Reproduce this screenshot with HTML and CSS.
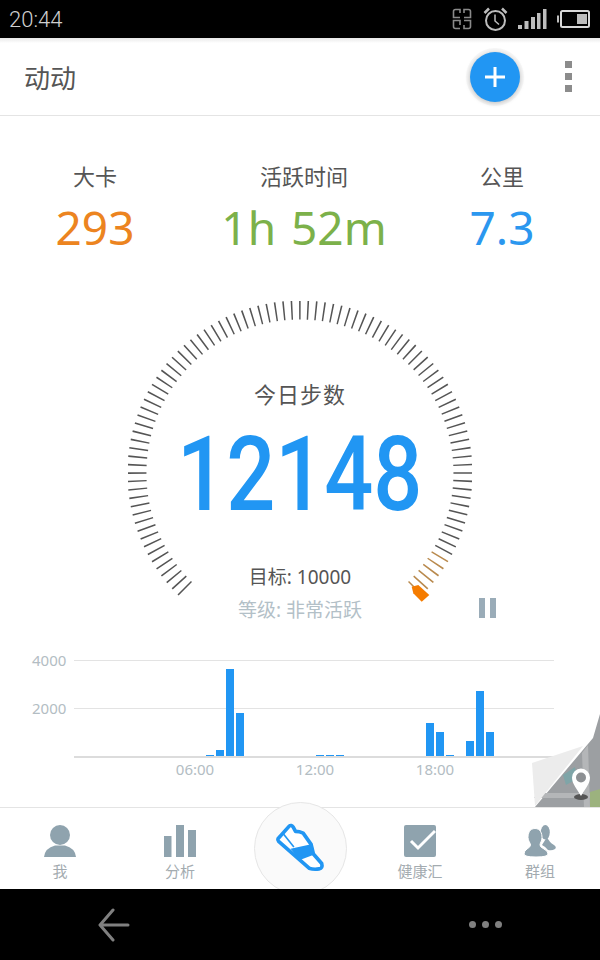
FILE: index.html
```html
<!DOCTYPE html>
<html lang="zh">
<head>
    <meta charset="UTF-8">
    <title>动动</title>
    <link rel="stylesheet" href="styles.css">
</head>
<body>

<div class="status-bar">
    <span class="clock">20:44</span>
    <div class="status-icons">
        <svg width="22" height="22" viewBox="0 0 22 22" fill="none" stroke="#8a8a8a" stroke-width="1.6">
            <path d="M9 9.5H2.5V3.5Q2.5 1.5 4.5 1.5H9V5M13 5V1.5H17.5Q19.5 1.5 19.5 3.5V9.500H13M9 17V12.500H2.500V18.500Q2.500 20.500 4.500 20.500H9M13 17V20.500H17.500Q19.500 20.500 19.500 18.500V12.500H13"/>
        </svg>
        <svg width="25" height="25" viewBox="0 0 25 25" fill="none" stroke="#bdbdbd" stroke-width="2">
            <circle cx="12.500" cy="13.500" r="9.500"/>
            <path d="M12 7.500V14L16 17.500" stroke-width="1.500"/>
            <path d="M1.500 6L6 1.500M19 1.500L23.500 6" stroke-width="2.500"/>
        </svg>
        <svg class="signal" width="29" height="21" viewBox="0 0 29 21" fill="#bdbdbd">
            <rect x="0" y="16" width="4" height="4"/>
            <rect x="6.500" y="12" width="4" height="8"/>
            <rect x="13" y="8" width="4" height="12"/>
            <rect x="19" y="4" width="3.500" height="16" />
            <rect x="25" y="0" width="3.500" height="20"/>
        </svg>
        <svg width="33" height="20" viewBox="0 0 33 20">
            <rect x="0" y="6.500" width="2" height="7" fill="#bdbdbd"/>
            <rect x="4" y="2" width="28" height="16" rx="1.500" fill="none" stroke="#d8d8d8" stroke-width="2"/>
            <rect x="20" y="5" width="10" height="10" fill="#bdbdbd"/>
        </svg>
    </div>
</div>

<header class="app-header">
    <h1 class="app-title">动动</h1>
    <button class="fab">
        <svg width="24" height="24" viewBox="0 0 24 24" stroke="#fff" stroke-width="3"><path d="M12 2V22M2 12H22"/></svg>
    </button>
    <div class="kebab"><i></i><i></i><i></i></div>
</header>

<main class="content">
    <section class="stats">
        <div class="stat">
            <div class="stat-label">大卡</div>
            <div class="stat-value orange">293</div>
        </div>
        <div class="stat">
            <div class="stat-label">活跃时间</div>
            <div class="stat-value green">1h 52m</div>
        </div>
        <div class="stat">
            <div class="stat-label">公里</div>
            <div class="stat-value blue">7.3</div>
        </div>
    </section>

    <section class="gauge">
        <!-- 96 ticks over 270deg, pathLength counts ticks so the dash repeats once per tick -->
        <svg class="gauge-ring" width="344" height="344" viewBox="0 0 344 344" fill="none" stroke-width="19" stroke-dasharray=".19 .81" stroke-dashoffset=".595">
            <path d="M59.600 290.100A163 163 0 1 1 313.800 252.300" pathLength="91" stroke="#555"/>
            <path d="M313.800 252.300A163 163 0 0 1 284.400 290.100" pathLength="6" stroke="#b98a4e"/>
            <polygon points="283.700,285.700 290.300,284 301.300,294 293.700,300.700 285.300,292.300" fill="#f57c00"/>
        </svg>
        <div class="gauge-title">今日步数</div>
        <div class="gauge-steps"><span>12148</span></div>
        <div class="gauge-goal">目标: 10000</div>
        <div class="gauge-level">等级: 非常活跃</div>
        <div class="pause"><i></i><i></i></div>
    </section>

    <section class="chart">
        <div class="chart-main">
            <div class="y-axis">
                <span>4000</span>
                <span>2000</span>
            </div>
            <div class="plot">
                <div class="bar" style="grid-column: 14; height: 1px"></div>
                <div class="bar" style="grid-column: 15; height: 6px"></div>
                <div class="bar" style="grid-column: 16; height: 87px"></div>
                <div class="bar" style="grid-column: 17; height: 43px"></div>
                <div class="bar" style="grid-column: 25; height: 1px"></div>
                <div class="bar" style="grid-column: 26; height: 1px"></div>
                <div class="bar" style="grid-column: 27; height: 1px"></div>
                <div class="bar" style="grid-column: 36; height: 33px"></div>
                <div class="bar" style="grid-column: 37; height: 24px"></div>
                <div class="bar" style="grid-column: 38; height: 1px"></div>
                <div class="bar" style="grid-column: 40; height: 15px"></div>
                <div class="bar" style="grid-column: 41; height: 65px"></div>
                <div class="bar" style="grid-column: 42; height: 24px"></div>
            </div>
        </div>
        <div class="x-axis">
            <span>06:00</span>
            <span>12:00</span>
            <span>18:00</span>
        </div>
    </section>

    <svg class="page-curl" width="70" height="120" viewBox="0 0 70 120">
        <polygon points="5,120 63,51 70,27 70,120" fill="#9c9fa2"/>
        <polygon points="33,88 45,80 47,92 36,98" fill="#7fa5a8"/>
        <polygon points="52,66 58,58 60,120 54,120" fill="#b4b6b8"/>
        <polygon points="8,106 70,106 70,111 4,111" fill="#b4b6b8"/>
        <polygon points="60,120 70,120 70,102 60,105" fill="#9cb27e"/>
        <polygon points="2,76 53,59 5,119" fill="#ececec"/>
        <ellipse cx="51" cy="110" rx="7" ry="3" fill="#555"/>
        <path d="M51 109C47 102 42 97 42 90.500A9 9 0 0 1 60 90.500C60 97 55 102 51 109Z" fill="#fff"/>
        <circle cx="51" cy="90.500" r="5" fill="#8d9093"/>
    </svg>
</main>

<nav class="tabs">
    <div class="tab">
        <svg width="32" height="32" viewBox="0 0 32 32" fill="#8fa3ae">
            <circle cx="16" cy="10" r="10"/>
            <path d="M0 32Q1 23 11 20.500H21Q31 23 32 32Z"/>
        </svg>
        <span>我</span>
    </div>
    <div class="tab">
        <svg width="32" height="32" viewBox="0 0 32 32" fill="#8fa3ae">
            <rect x="0" y="11" width="7.500" height="21"/>
            <rect x="12" y="0" width="8" height="32"/>
            <rect x="24" y="5" width="8" height="27"/>
        </svg>
        <span>分析</span>
    </div>
    <div class="tab tab-center">
        <div class="tab-circle">
            <svg width="53" height="50" viewBox="100 80 160 150" fill="none" stroke="#2196f3" stroke-width="11" stroke-linejoin="round">
                <path d="M112 130L146 92Q152 87 158 95L165 108Q177 108 188 113L212 147L219 176L244 205Q248 219 236 221Q220 224 206 219L114 138Q110 134 112 130Z" fill="#fff"/>
                <path d="M128 115L160 155" stroke-width="5"/>
                <path d="M150 160L216 146L222 178L178 194Z" fill="#2196f3" stroke="none"/>
            </svg>
        </div>
    </div>
    <div class="tab">
        <svg width="32" height="32" viewBox="0 0 32 32">
            <rect x="0" y="0" width="32" height="32" rx="2" fill="#8fa3ae"/>
            <path d="M7 16L14 23L31 6" fill="none" stroke="#fff" stroke-width="3"/>
        </svg>
        <span>健康汇</span>
    </div>
    <div class="tab">
        <svg width="32" height="32" viewBox="0 0 32 32" fill="#8fa3ae">
            <ellipse cx="21.300" cy="7.300" rx="4.500" ry="7.300"/>
            <path d="M23 12Q25 17 30 20Q33 22 31 24Q28 26 24 25Q22 22 18 20Z"/>
            <path d="M11 3.500C5.500 3.500 4 8.500 4 12.500C4 16 6.500 18 6.500 20Q6.500 22 3 24Q0 26 0 29Q0 32 12 32Q24 32 24 29Q24 26 20 24Q16 22 16 20C16 18 18 16 18 12.500C18 8.500 16.500 3.500 11 3.500Z" stroke="#fff" stroke-width="1"/>
        </svg>
        <span>群组</span>
    </div>
</nav>

<div class="system-nav">
    <svg width="32" height="34" viewBox="0 0 32 34" fill="none" stroke="#808080" stroke-width="3" stroke-linecap="round" stroke-linejoin="round">
        <path d="M15 2L2 17L15 32M3 17H30"/>
    </svg>
    <div class="more-dots"><i></i><i></i><i></i></div>
</div>

</body>
</html>
```

FILE: styles.css
```css
* {
    box-sizing: border-box;
}

body {
    font-family: 'Noto Sans', 'Noto Sans CJK SC', sans-serif;
    background-color: #fff;
    color: #555;
    margin: 0;
    width: 600px;
    height: 960px;
    display: flex;
    flex-direction: column;
    overflow: hidden;
}

.status-bar {
    height: 38px;
    background-color: #000;
    display: flex;
    align-items: center;
    justify-content: space-between;
    padding: 0 10px 0 9px;
}

.clock {
    font-family: 'Roboto', sans-serif;
    font-weight: 300;
    font-size: 22px;
    color: #d0d0d0;
}

.status-icons {
    display: flex;
    align-items: center;
    gap: 10px;
}

.status-icons svg {
    display: block;
}

.app-header {
    height: 78px;
    display: flex;
    align-items: center;
    padding: 0 28px 0 24px;
    background: linear-gradient(#e8e8e8, #fff 5px);
    border-bottom: 1px solid #e4e4e4;
}

.app-title {
    flex: 1;
    margin: 0;
    font-weight: 400;
    font-size: 26px;
    color: #555;
}

.fab {
    width: 50px;
    height: 50px;
    margin-right: 45px;
    padding: 0;
    border: none;
    border-radius: 50%;
    background-color: #2196f3;
    box-shadow: 0 1px 5px rgba(0, 0, 0, 0.25), 0 0 0 4px rgba(0, 0, 0, 0.03);
    display: flex;
    align-items: center;
    justify-content: center;
}

.kebab {
    display: flex;
    flex-direction: column;
    gap: 5px;
}

.kebab i {
    display: block;
    width: 7px;
    height: 7px;
    background-color: #8c8c8c;
}

.content {
    position: relative;
    height: 691px;
    padding-top: 42px;
}

.stats {
    display: grid;
    grid-template-columns: 190px 228px 168px;
    text-align: center;
}

.stat-label {
    font-size: 22px;
    line-height: 36px;
    color: #555;
}

.stat-value {
    font-size: 46px;
    line-height: 60px;
    margin-top: 3px;
    word-spacing: 3px;
}

.orange {
    color: #ec8420;
}

.green {
    color: #7cb14a;
}

.blue {
    color: #2b97ef;
}

.gauge {
    position: relative;
    width: 344px;
    height: 334px;
    margin: 44px auto 0;
    padding-top: 76px;
    text-align: center;
}

.gauge-ring {
    position: absolute;
    top: 0;
    left: 0;
}

.gauge-title {
    font-size: 22px;
    line-height: 34px;
    letter-spacing: 1px;
    color: #555;
}

.gauge-steps {
    font-family: 'Roboto', sans-serif;
    font-weight: 500;
    font-size: 104px;
    line-height: 112px;
    margin-top: 8px;
    color: #2196f3;
}

.gauge-steps span {
    display: inline-block;
    transform: scaleX(0.83);
}

.gauge-goal {
    font-size: 19px;
    line-height: 30px;
    margin-top: 31px;
    color: #555;
}

.gauge-level {
    font-size: 19px;
    line-height: 30px;
    margin-top: 3px;
    color: #b3c0c7;
}

.pause {
    position: absolute;
    left: 351px;
    top: 297px;
    display: flex;
    gap: 5px;
}

.pause i {
    display: block;
    width: 6px;
    height: 20px;
    background-color: #9aacb8;
}

.chart {
    margin-top: 25px;
}

.chart-main {
    display: flex;
    height: 98px;
}

.y-axis {
    width: 74px;
    padding-left: 32px;
    font-size: 15px;
    color: #b3bdc3;
    display: flex;
    flex-direction: column;
}

.y-axis span {
    height: 48px;
    line-height: 0;
}

.plot {
    width: 480px;
    display: grid;
    grid-template-columns: repeat(48, 10px);
    align-items: end;
    background-image: linear-gradient(#e3e3e3, #e3e3e3), linear-gradient(#e3e3e3, #e3e3e3);
    background-size: 100% 1px, 100% 1px;
    background-position: 0 0, 0 48px;
    background-repeat: no-repeat;
    border-bottom: 2px solid #dcdcdc;
}

.bar {
    grid-row: 1;
    width: 8px;
    margin-left: 1.5px;
    background-color: #2196f3;
}

.x-axis {
    display: flex;
    padding: 1px 0 0 135px;
    font-size: 15px;
    color: #b3bdc3;
}

.x-axis span {
    width: 120px;
    text-align: center;
}

.page-curl {
    position: absolute;
    right: 0;
    bottom: 0;
}

.tabs {
    height: 82px;
    display: grid;
    grid-template-columns: repeat(5, 120px);
    border-top: 1px solid #e4e4e4;
}

.tab {
    display: flex;
    flex-direction: column;
    align-items: center;
    padding-top: 17px;
    font-size: 15px;
    color: #a3abb0;
}

.tab span {
    line-height: 20px;
    margin-top: 4px;
}

.tab svg {
    display: block;
}

.tab-center {
    position: relative;
}

.tab-circle {
    position: absolute;
    top: -6px;
    left: 14px;
    width: 93px;
    height: 93px;
    border: 1px solid #e6e6e6;
    border-radius: 50%;
    background-color: #fafafa;
    display: flex;
    align-items: flex-start;
    justify-content: center;
    padding-top: 19px;
}

.system-nav {
    flex: 1;
    position: relative;
    background-color: #000;
    display: flex;
    align-items: center;
    padding: 0 98px;
    justify-content: space-between;
}

.more-dots {
    display: flex;
    gap: 6px;
}

.more-dots i {
    display: block;
    width: 7px;
    height: 7px;
    border-radius: 50%;
    background-color: #808080;
}
```
